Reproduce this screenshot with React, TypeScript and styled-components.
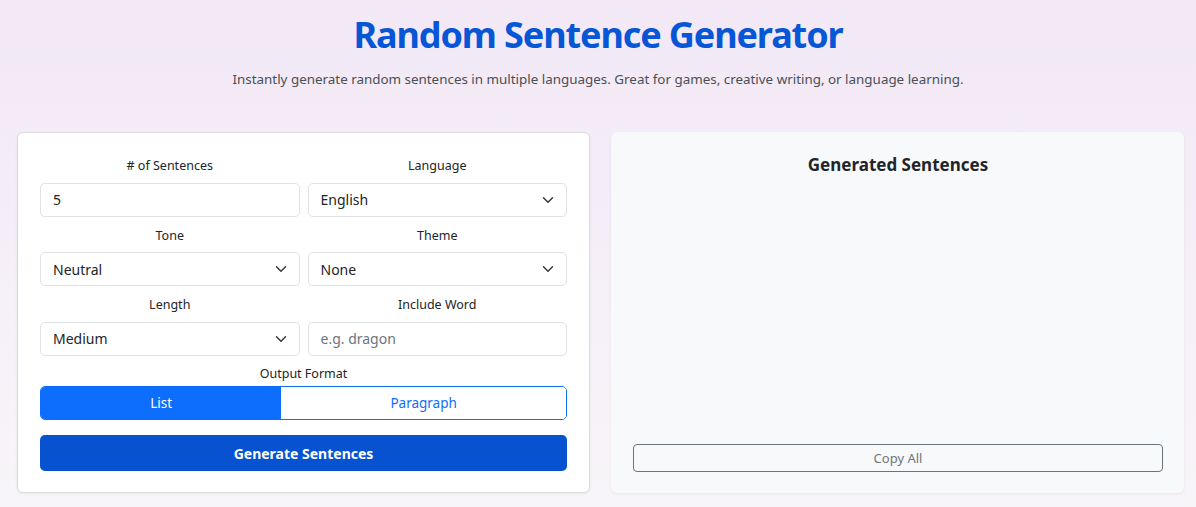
import React from "react";
import styled, { createGlobalStyle } from "styled-components";

const Global = createGlobalStyle`
  html, body { margin: 0; padding: 0; }
  body {
    font-family: "Noto Sans", "Open Sans", sans-serif;
    background: linear-gradient(180deg, #f2e8f6 0%, #f8f5f9 100%);
    min-height: 507px;
    color: #212529;
  }
  * { box-sizing: border-box; }
`;

const Page = styled.div`
  width: 1196px;
  height: 507px;
  overflow: hidden;
`;

const Header = styled.header`
  text-align: center;
  padding-top: 12px;
`;

const Title = styled.h1`
  margin: 0;
  font-size: 36px;
  line-height: 46px;
  font-weight: 700;
  letter-spacing: -1.1px;
  color: #0656d6;
`;

const Subtitle = styled.p`
  margin: 11px 0 0;
  font-size: 13.4px;
  line-height: 20px;
  color: #4a4f55;
`;

const Main = styled.main`
  display: grid;
  grid-template-columns: 573px 573px;
  gap: 21px;
  padding: 0 0 0 17px;
  margin-top: 43px;
`;

const LeftCard = styled.section`
  background: #fff;
  border: 1px solid #dadbdd;
  border-radius: 6px;
  box-shadow: 0 1px 3px rgba(0, 0, 0, 0.06);
  padding: 23px 22px 21px 22px;
  height: 361px;
`;

const RightCard = styled.section`
  background: #f8f9fb;
  border-radius: 6px;
  box-shadow: 0 1px 3px rgba(0, 0, 0, 0.06);
  padding: 22px 21px 21px 22px;
  height: 361px;
  display: flex;
  flex-direction: column;
`;

const FieldGrid = styled.div`
  display: grid;
  grid-template-columns: 1fr 1fr;
  column-gap: 8px;
  row-gap: 9px;
`;

const Field = styled.div<{ $full?: boolean }>`
  display: flex;
  flex-direction: column;
  grid-column: ${(p) => (p.$full ? "1 / -1" : "auto")};
  margin-top: ${(p) => (p.$full ? "-1px" : "0")};
`;

const Label = styled.label<{ $tight?: boolean }>`
  font-size: 12.5px;
  line-height: 19.5px;
  text-align: center;
  color: #212529;
  margin-bottom: ${(p) => (p.$tight ? "3px" : "7px")};
`;

const Box = styled.div<{ $placeholder?: boolean }>`
  height: 34px;
  border: 1px solid #dee2e6;
  border-radius: 5px;
  background: #fff;
  padding: 0 12px;
  display: flex;
  align-items: center;
  justify-content: space-between;
  font-size: 14px;
  color: ${(p) => (p.$placeholder ? "#6c757d" : "#212529")};
`;

const Chevron = () => (
  <svg width="12" height="12" viewBox="0 0 16 16" fill="none">
    <path d="M2 5l6 6 6-6" stroke="#343a40" strokeWidth="2" strokeLinecap="round" strokeLinejoin="round" />
  </svg>
);

const Toggle = styled.div`
  display: flex;
  height: 34px;
  border: 1px solid #0d6efd;
  border-radius: 5px;
  overflow: hidden;
`;

const ToggleBtn = styled.div<{ $active?: boolean }>`
  flex: 1 1 auto;
  padding: 0 12px;
  display: flex;
  align-items: center;
  justify-content: center;
  font-size: 13.5px;
  background: ${(p) => (p.$active ? "#0d6efd" : "#fff")};
  color: ${(p) => (p.$active ? "#fff" : "#0d6efd")};
`;

const GenerateBtn = styled.button`
  margin-top: 15px;
  width: 100%;
  height: 36px;
  border: none;
  border-radius: 5px;
  background: #0652d1;
  color: #fff;
  font-family: inherit;
  font-size: 14px;
  font-weight: 700;
`;

const OutTitle = styled.h2`
  margin: 0;
  text-align: center;
  font-size: 17px;
  line-height: 22px;
  font-weight: 700;
  color: #212529;
`;

const Spacer = styled.div`
  flex: 1;
`;

const CopyBtn = styled.button`
  height: 28px;
  width: 100%;
  border: 1px solid #6c757d;
  border-radius: 4px;
  background: transparent;
  color: #6c757d;
  font-family: inherit;
  font-size: 13px;
`;

export default function App() {
  return (
    <Page>
      <Global />
      <Header>
        <Title>Random Sentence Generator</Title>
        <Subtitle>
          Instantly generate random sentences in multiple languages. Great for games, creative writing, or language learning.
        </Subtitle>
      </Header>
      <Main>
        <LeftCard>
          <FieldGrid>
            <Field>
              <Label># of Sentences</Label>
              <Box>5</Box>
            </Field>
            <Field>
              <Label>Language</Label>
              <Box>
                English <Chevron />
              </Box>
            </Field>
            <Field>
              <Label>Tone</Label>
              <Box>
                Neutral <Chevron />
              </Box>
            </Field>
            <Field>
              <Label>Theme</Label>
              <Box>
                None <Chevron />
              </Box>
            </Field>
            <Field>
              <Label>Length</Label>
              <Box>
                Medium <Chevron />
              </Box>
            </Field>
            <Field>
              <Label>Include Word</Label>
              <Box $placeholder>e.g. dragon</Box>
            </Field>
            <Field $full>
              <Label $tight>Output Format</Label>
              <Toggle>
                <ToggleBtn $active>List</ToggleBtn>
                <ToggleBtn>Paragraph</ToggleBtn>
              </Toggle>
            </Field>
          </FieldGrid>
          <GenerateBtn>Generate Sentences</GenerateBtn>
        </LeftCard>
        <RightCard>
          <OutTitle>Generated Sentences</OutTitle>
          <Spacer />
          <CopyBtn>Copy All</CopyBtn>
        </RightCard>
      </Main>
    </Page>
  );
}
